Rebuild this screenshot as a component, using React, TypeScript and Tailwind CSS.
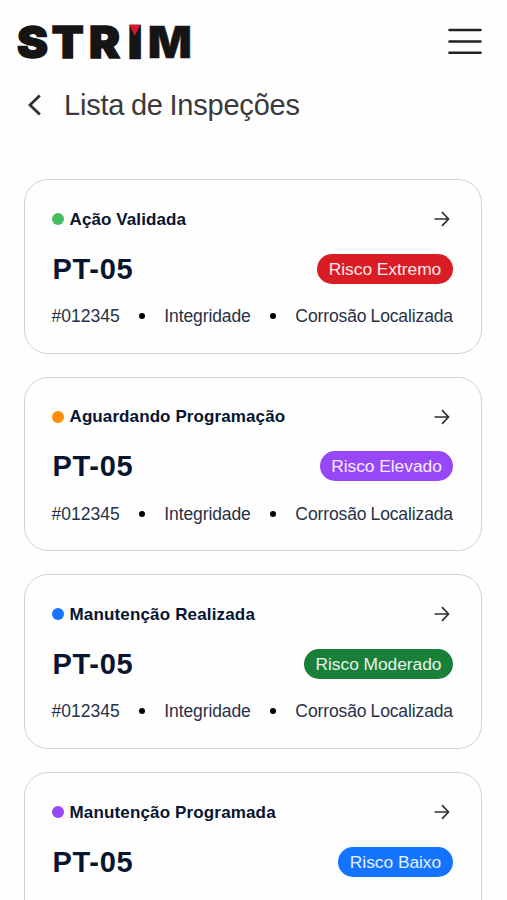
import { clsx } from 'clsx'

interface Inspection {
  status: string
  statusClass: string
  dotClass: string
  risk: string
  riskClass: string
}

const inspections: Inspection[] = [
  {
    status: 'Ação Validada',
    statusClass: 'tracking-[0.1px]',
    dotClass: 'bg-[#45bd63]',
    risk: 'Risco Extremo',
    riskClass: 'bg-[#da1c24] w-[136px]',
  },
  {
    status: 'Aguardando Programação',
    statusClass: 'tracking-[0.1px]',
    dotClass: 'bg-[#ff8b07]',
    risk: 'Risco Elevado',
    riskClass: 'bg-[#9747f5] w-[133px]',
  },
  {
    status: 'Manutenção Realizada',
    statusClass: 'tracking-[0.16px]',
    dotClass: 'bg-[#1473ff]',
    risk: 'Risco Moderado',
    riskClass: 'bg-[#188038] w-[149px]',
  },
  {
    status: 'Manutenção Programada',
    statusClass: 'tracking-[0.15px]',
    dotClass: 'bg-[#9747f5]',
    risk: 'Risco Baixo',
    riskClass: 'bg-[#1473ff] w-[115px]',
  },
]

function Logo() {
  return (
    <svg className="overflow-visible" width="176" height="40" viewBox="0 0 176 40" role="img" aria-label="Strim">
      <text
        transform="scale(1.05 1)"
        x="0 33.2 68.6 106.2 124.6"
        y="36.6"
        fill="#151515"
        stroke="#151515"
        strokeWidth="1.5"
        fontFamily="Inter, sans-serif"
        fontWeight="900"
        fontSize="44.3"
      >
        STR
        <tspan strokeWidth="2.4" fontSize="43.5">I</tspan>
        <tspan strokeWidth="0.4" fontSize="44">M</tspan>
      </text>
      <path d="M112 3.8h11.5l-5.7 11z" fill="#d9152b" />
    </svg>
  )
}

function InspectionCard({ item }: { item: Inspection }) {
  return (
    <article className="h-[174.5px] shrink-0 rounded-[24px] border-[1.5px] border-[#d2d2d2] pt-[25.6px] pl-[27px] pr-[28px]">
      <div className="flex h-7 items-center justify-between">
        <div className="flex items-center gap-[6px]">
          <span className={clsx('-mt-px size-3 rounded-full', item.dotClass)} />
          <span className={clsx('whitespace-nowrap text-[17px] font-bold leading-7', item.statusClass)}>
            {item.status}
          </span>
        </div>
        <svg className="-mt-px mr-[3px]" width="16" height="16" viewBox="0 0 16 16" fill="none" stroke="#303030" strokeWidth="1.7">
          <path d="M0.5 8h14M8 1.2 14.5 8 8 14.8" />
        </svg>
      </div>

      <div className="mt-[20px] flex h-[30px] items-center justify-between">
        <h2 className="ml-px text-[29px] font-bold leading-[30px] tracking-[0.7px]">PT-05</h2>
        <span
          className={clsx(
            'flex h-[30px] items-center justify-center whitespace-nowrap rounded-full text-[17.4px] tracking-[-0.05px] text-white/90',
            item.riskClass,
          )}
        >
          {item.risk}
        </span>
      </div>

      <div className="mt-[20.5px] flex h-6 items-center justify-between whitespace-nowrap text-[17.5px] leading-[16px] text-[#283147]">
        <span>#012345</span>
        <span className="size-[6px] rounded-full bg-black" />
        <span className="tracking-[-0.1px]">Integridade</span>
        <span className="size-[6px] rounded-full bg-black" />
        <span className="tracking-[-0.12px] [word-spacing:-0.6px]">Corrosão Localizada</span>
      </div>
    </article>
  )
}

export default function App() {
  return (
    <div className="h-[900px] w-[507px] overflow-hidden bg-[#fefefe] font-['Liberation_Sans',Arial,sans-serif] text-[#071530]">
      <header className="flex h-[82px] items-start justify-between pl-[17px] pr-[25px] pt-[21px]">
        <Logo />
        <button className="mt-[7px]" aria-label="Menu">
          <svg width="34" height="28" viewBox="0 0 34 28" stroke="#222" strokeWidth="2.6" strokeLinecap="round">
            <path d="M1.5 2h31M1.5 13.5h31M1.5 24.7h31" />
          </svg>
        </button>
      </header>

      <div className="flex h-[46px] items-center pl-[27px]">
        <svg width="14" height="22" viewBox="0 0 14 22" fill="none" stroke="#303030" strokeWidth="2.8">
          <path d="M12.8 1.5 3 11l9.8 9.5" />
        </svg>
        <h1 className="ml-[23px] mt-px whitespace-nowrap text-[29px] tracking-[-0.2px] text-[#3a3a3a] [word-spacing:-1.2px]">
          Lista de Inspeções
        </h1>
      </div>

      <main className="mt-[51px] flex flex-col gap-[23.2px] pl-[23.5px] pr-[25px]">
        {inspections.map((item) => (
          <InspectionCard key={item.status} item={item} />
        ))}
      </main>
    </div>
  )
}
